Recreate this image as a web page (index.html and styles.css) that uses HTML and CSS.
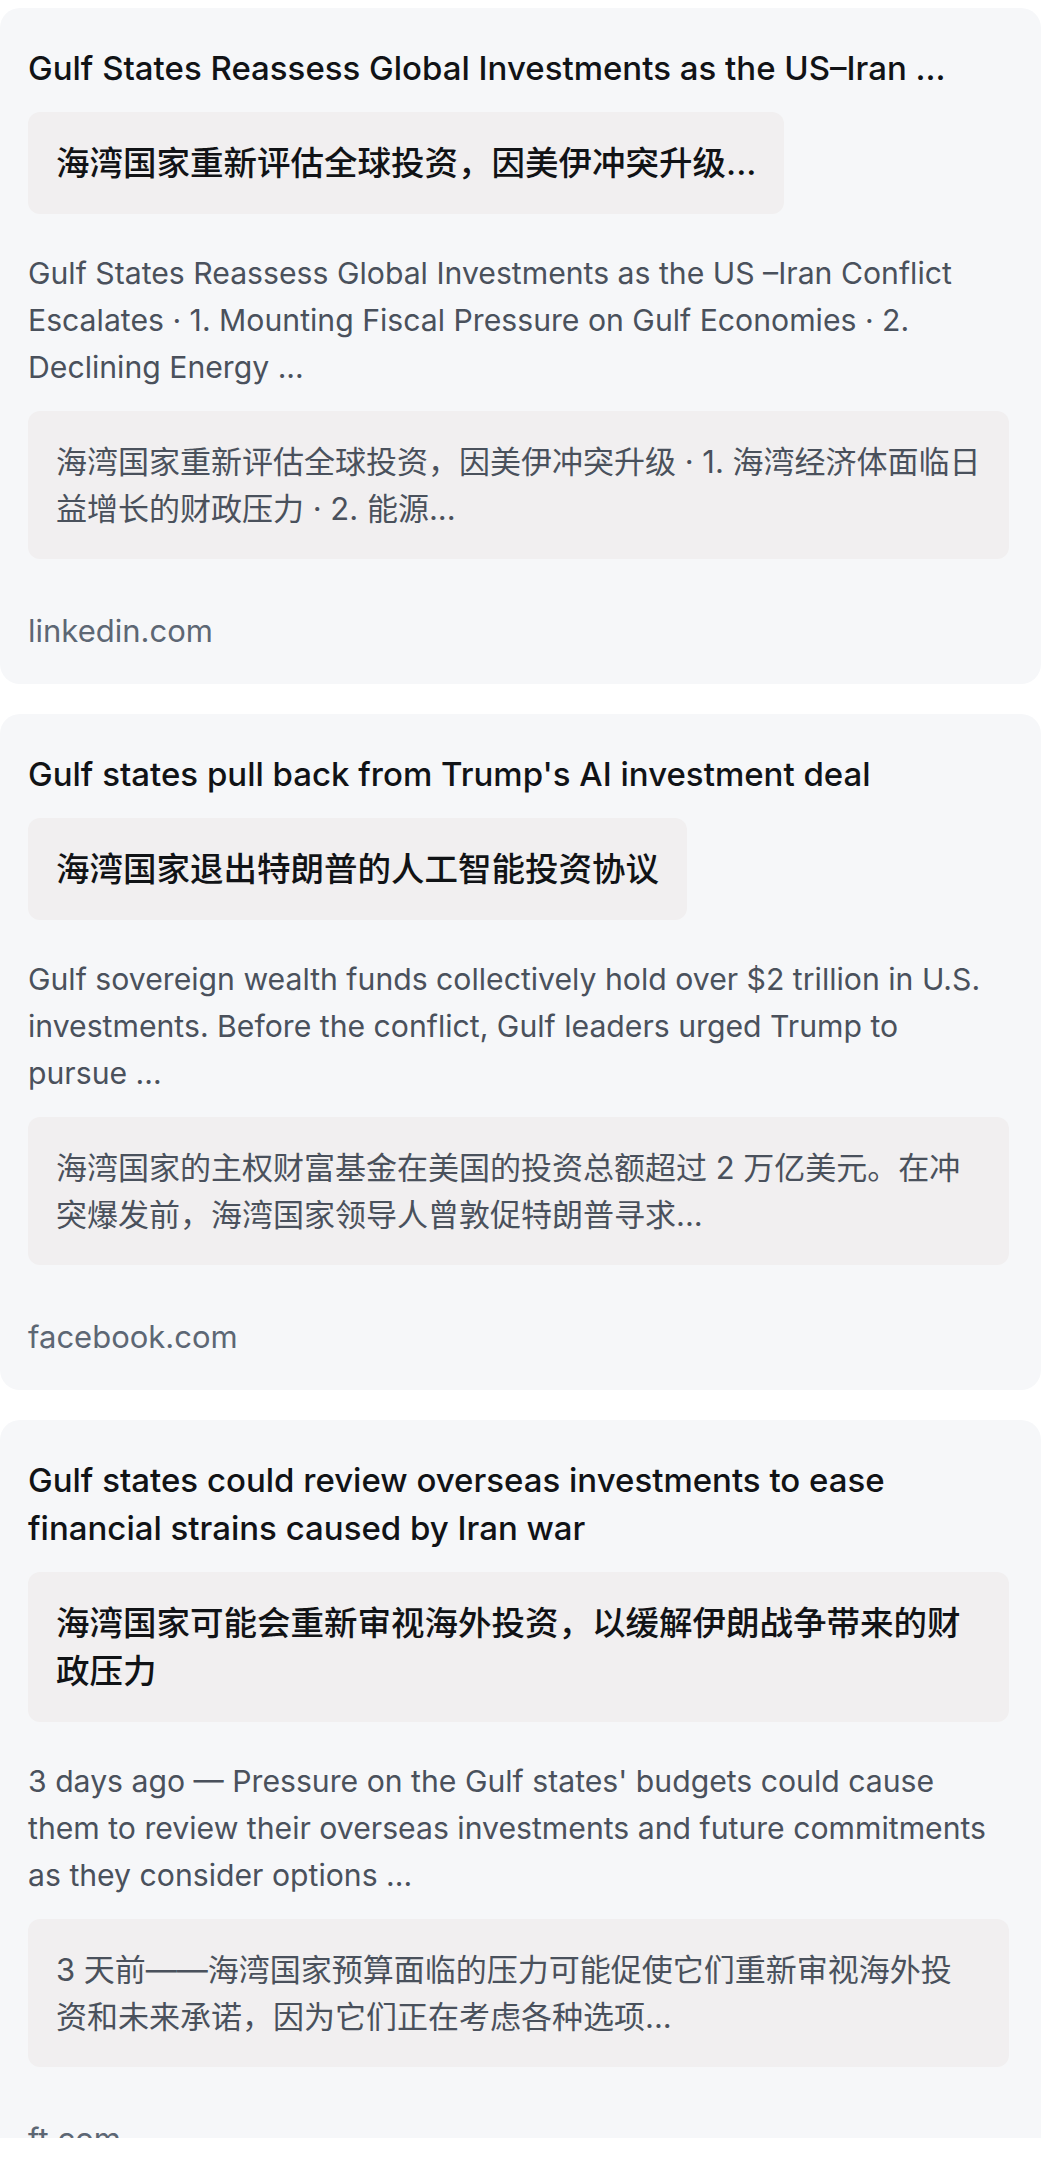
FILE: index.html
```html
<!DOCTYPE html>
<html lang="zh-CN">

<head>
    <meta charset="UTF-8">
    <meta name="viewport" content="width=device-width, initial-scale=1.0">
    <title>Results</title>
    <link rel="stylesheet" href="styles.css">
</head>

<body>
    <div class="list">
        <div class="card">
            <h3 class="title">Gulf States Reassess Global Investments as the US–Iran ...</h3>
            <div class="trans trans-title">海湾国家重新评估全球投资，因美伊冲突升级...</div>
            <p class="snippet">Gulf States Reassess Global Investments as the US –Iran Conflict Escalates · 1. Mounting Fiscal Pressure on Gulf Economies · 2. Declining Energy ...</p>
            <div class="trans trans-snippet">海湾国家重新评估全球投资，因美伊冲突升级 · 1. 海湾经济体面临日益增长的财政压力 · 2. 能源...</div>
            <div class="source">linkedin.com</div>
        </div>
        <div class="card">
            <h3 class="title">Gulf states pull back from Trump's AI investment deal</h3>
            <div class="trans trans-title">海湾国家退出特朗普的人工智能投资协议</div>
            <p class="snippet">Gulf sovereign wealth funds collectively hold over $2 trillion in U.S. investments. Before the conflict, Gulf leaders urged Trump to pursue ...</p>
            <div class="trans trans-snippet">海湾国家的主权财富基金在美国的投资总额超过 2 万亿美元。在冲突爆发前，海湾国家领导人曾敦促特朗普寻求...</div>
            <div class="source">facebook.com</div>
        </div>
        <div class="card">
            <h3 class="title">Gulf states could review overseas investments to ease financial strains caused by Iran war</h3>
            <div class="trans trans-title">海湾国家可能会重新审视海外投资，以缓解伊朗战争带来的财政压力</div>
            <p class="snippet">3 days ago — Pressure on the Gulf states' budgets could cause them to review their overseas investments and future commitments as they consider options ...</p>
            <div class="trans trans-snippet">3 天前——海湾国家预算面临的压力可能促使它们重新审视海外投资和未来承诺，因为它们正在考虑各种选项...</div>
            <div class="source">ft.com</div>
        </div>
    </div>
    <div class="bottom-fade"></div>
</body>

</html>
```

FILE: styles.css
```css
/* 初始化 */
* {
    margin: 0;
    padding: 0;
    box-sizing: border-box;
}

body {
    background-color: #fff;
    font-family: Inter, "Noto Sans CJK SC", sans-serif;
    overflow: hidden;
}

.list {
    display: flex;
    flex-direction: column;
    gap: 30px;
    padding: 8px 12px 0 0;
}

.card {
    display: flex;
    flex-direction: column;
    align-items: flex-start;
    padding: 36px 32px 30px 28px;
    border-radius: 20px;
    background-color: #f6f7f9;
}

.title {
    font-size: 33px;
    font-weight: 500;
    line-height: 48px;
    color: #111316;
}

.trans {
    border-radius: 12px;
    background-color: #f1eff0;
    padding: 27px 28px;
}

.trans-title {
    margin-top: 20px;
    font-size: 33.5px;
    font-weight: 500;
    line-height: 48px;
    color: #111316;
}

.snippet {
    margin-top: 36px;
    padding-right: 12px;
    font-size: 30.2px;
    line-height: 47px;
    color: #4a515c;
}

.trans-snippet {
    align-self: stretch;
    margin-top: 20px;
    font-size: 31px;
    line-height: 47px;
    color: #4a515c;
}

.source {
    margin-top: 48px;
    font-size: 31px;
    line-height: 47px;
    color: #5d6774;
}

.bottom-fade {
    position: fixed;
    left: 0;
    right: 0;
    bottom: 0;
    height: 23px;
    background-color: #fff;
}
```
